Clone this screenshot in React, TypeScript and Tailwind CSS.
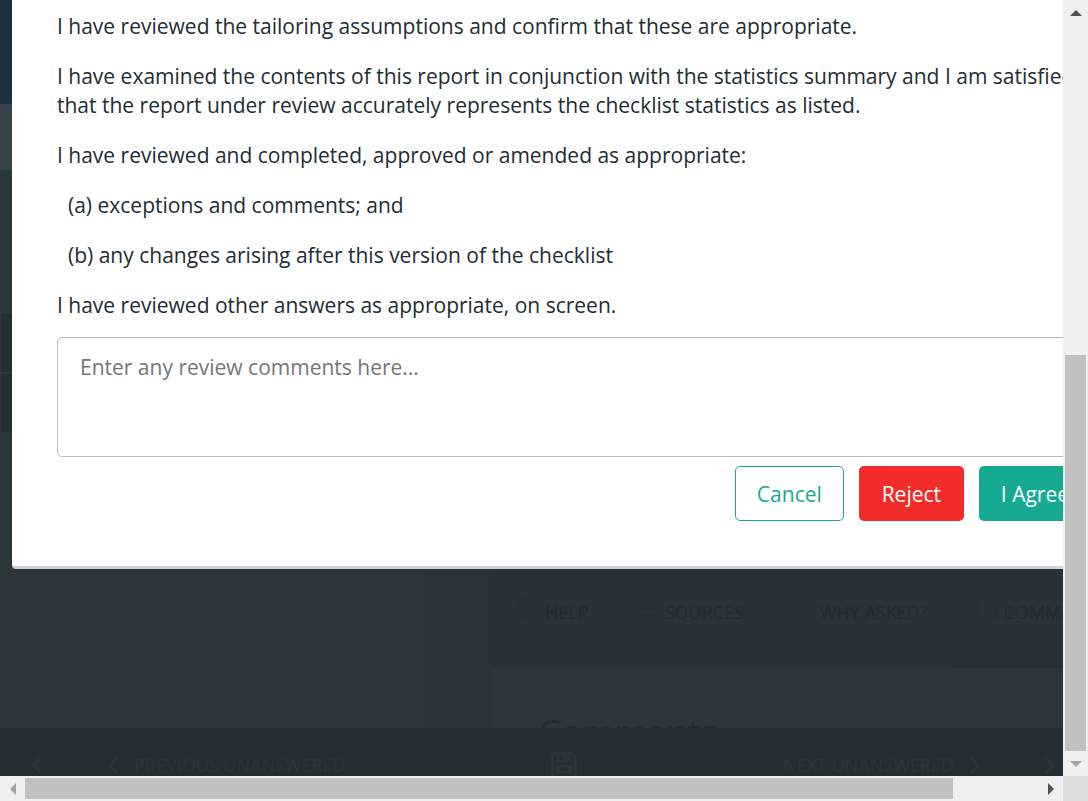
import React from "react";

function Chevron({ dir }: { dir: "left" | "right" }) {
  return (
    <svg width="10" height="17" viewBox="0 0 10 17" fill="none" stroke="currentColor" strokeWidth="3" aria-hidden="true">
      {dir === "left" ? <path d="M9 1 L1.8 8.5 L9 16" /> : <path d="M1 1 L8.2 8.5 L1 16" />}
    </svg>
  );
}

function InfoIcon() {
  return (
    <svg width="22" height="24" viewBox="0 0 22 24" fill="none" stroke="currentColor" strokeWidth="1.5" aria-hidden="true">
      <circle cx="11" cy="12" r="10" />
      <path d="M9.5 10.5 L12 10 L10.2 17 L12.4 16.4 M12.4 6.4 L12.6 7.6" />
    </svg>
  );
}

function ListIcon() {
  return (
    <svg width="22" height="24" viewBox="0 0 22 24" fill="none" stroke="currentColor" strokeWidth="1.6" aria-hidden="true">
      <path d="M6 6 H21 M6 12.5 H21 M6 19 H21 M1 6 H3 M1 12.5 H3 M1 19 H3" />
    </svg>
  );
}

function QuestionIcon() {
  return (
    <svg width="22" height="24" viewBox="0 0 22 24" fill="none" stroke="currentColor" strokeWidth="1.6" aria-hidden="true">
      <path d="M6 7 V4 H15 Q18 7 14.5 9.5 Q11 12 11 16 M11 19 V21.5" />
    </svg>
  );
}

function CommentIcon() {
  return (
    <svg width="22" height="24" viewBox="0 0 22 24" fill="none" stroke="currentColor" strokeWidth="1.5" aria-hidden="true">
      <path d="M17 20 A10 10 0 1 1 20 16 L21.5 22.5 Z" />
    </svg>
  );
}

function SaveIcon() {
  return (
    <svg width="26" height="27" viewBox="0 0 26 27" fill="none" stroke="currentColor" strokeWidth="2.6" aria-hidden="true">
      <path d="M3 1.5 H20 L24.5 6 V23.5 Q24.5 25.5 22.5 25.5 H3.5 Q1.5 25.5 1.5 23.5 V3 Q1.5 1.5 3 1.5 Z" />
      <path d="M7 2 V9 H17 V2 M13.5 3 V7.5 M7 14.5 H19 V20 H7 Z" />
    </svg>
  );
}

const tabs = [
  { label: "HELP", icon: <InfoIcon />, active: false },
  { label: "SOURCES", icon: <ListIcon />, active: false },
  { label: "WHY ASKED?", icon: <QuestionIcon />, active: false },
  { label: "COMMENTS", icon: <CommentIcon />, active: true },
];

function ChecklistPage() {
  return (
    <div className="flex h-full flex-col bg-[#293439]">
      <header className="h-[104px] shrink-0 bg-[#1f2f3d]" />
      <div className="h-[66px] shrink-0 bg-[#384347]" />
      <div className="flex min-h-0 flex-1">
        <aside className="w-[425px] shrink-0 bg-[#2b363b] pt-36 pl-px">
          <div className="flex flex-col gap-0.5">
            <div className="h-[58px] bg-[#242f34]" />
            <div className="h-[58px] bg-[#242f34]" />
          </div>
        </aside>
        <section className="ml-[67px] flex min-w-0 flex-1 flex-col justify-end overflow-hidden bg-[#283338]">
          <nav className="flex h-28 shrink-0">
            {tabs.map((tab) => (
              <button
                key={tab.label}
                type="button"
                className={
                  tab.active
                    ? "flex shrink-0 items-center gap-[7px] border-b-4 border-[#213137] px-6 pt-1 text-lg font-medium text-[#202b30]"
                    : "flex shrink-0 items-center gap-[7px] pr-[23px] pl-6 text-lg font-medium text-[#202b30]"
                }
              >
                <span className="pb-2 text-[#263136]">{tab.icon}</span>
                {tab.label}
              </button>
            ))}
          </nav>
          <div className="h-[60px] shrink-0 overflow-hidden bg-[#2b363b] px-[47px] pt-11">
            <h2 className="text-[35px] leading-10 text-[#222d32]">Comments</h2>
          </div>
        </section>
      </div>
      <footer className="h-12 shrink-0 overflow-hidden bg-[#242f34] text-lg text-[#2a353a]">
        <div className="flex h-[74px] items-center justify-between pr-2 pl-8">
          <div className="flex items-center gap-[66px]">
            <button type="button" aria-label="Previous"><Chevron dir="left" /></button>
            <button type="button" className="flex items-center gap-4 whitespace-nowrap">
              <Chevron dir="left" />
              PREVIOUS UNANSWERED
            </button>
          </div>
          <button type="button" aria-label="Save" className="text-[#2b363a]"><SaveIcon /></button>
          <div className="flex items-center gap-[65px]">
            <button type="button" className="flex items-center gap-4 whitespace-nowrap">
              NEXT UNANSWERED
              <Chevron dir="right" />
            </button>
            <button type="button" aria-label="Next"><Chevron dir="right" /></button>
          </div>
        </div>
      </footer>
    </div>
  );
}

function ReviewDialog() {
  return (
    <div
      role="dialog"
      aria-label="Review"
      className="absolute top-0 left-3 w-[1124px] rounded-b border-b-3 border-[#ccd3d7] bg-white px-[45px] pt-3 pb-[45px] text-[21px] leading-[29px] text-[#212d32]"
    >
      <div className="flex flex-col gap-[21px]">
        <p>I have reviewed the tailoring assumptions and confirm that these are appropriate.</p>
        <p>
          I have examined the contents of this report in conjunction with the statistics summary and I am satisfied
          that the report under review accurately represents the checklist statistics as listed.
        </p>
        <p>I have reviewed and completed, approved or amended as appropriate:</p>
        <p className="pl-[11px]">(a) exceptions and comments; and</p>
        <p className="pl-[11px]">(b) any changes arising after this version of the checklist</p>
        <p>I have reviewed other answers as appropriate, on screen.</p>
      </div>
      <textarea
        aria-label="Review comments"
        placeholder="Enter any review comments here..."
        className="mt-[17px] block h-[120px] w-full resize-none rounded-[5px] border border-[#b4bdc2] px-[22px] py-[15px] placeholder:text-[#757575]"
      />
      <div className="mt-[9px] flex justify-end gap-[15px]">
        <button type="button" className="h-[55px] min-w-[109px] rounded-[5px] border border-[#16a992] bg-white px-[21px] pt-0.5 font-medium text-[#16a992]">
          Cancel
        </button>
        <button type="button" className="h-[55px] min-w-[105px] rounded-[5px] bg-[#f22b2b] px-[22px] pt-0.5 font-medium text-white">
          Reject
        </button>
        <button type="button" className="h-[55px] rounded-[5px] bg-[#16aa93] px-[22px] pt-0.5 font-medium text-white">
          I Agree
        </button>
      </div>
    </div>
  );
}

export default function App() {
  return (
    <div className="grid h-screen grid-cols-[minmax(0,1fr)_25px] grid-rows-[minmax(0,1fr)_25px] overflow-hidden font-['Open_Sans',sans-serif]">
      <main className="relative overflow-hidden">
        <ChecklistPage />
        <ReviewDialog />
      </main>
      <div className="flex flex-col bg-[#f0f0f0]">
        <button type="button" aria-label="Scroll up" className="flex h-[25px] items-center justify-center">
          <svg width="12" height="6" viewBox="0 0 12 6" fill="#505050" aria-hidden="true"><path d="M6 0 L12 6 H0 Z" /></svg>
        </button>
        <div className="flex-[330_1_0%]" />
        <div className="mx-0.5 flex-[396_1_0%] bg-[#c1c1c1]" />
        <button type="button" aria-label="Scroll down" className="flex h-[25px] items-center justify-center">
          <svg width="12" height="6" viewBox="0 0 12 6" fill="#a3a3a3" aria-hidden="true"><path d="M0 0 H12 L6 6 Z" /></svg>
        </button>
      </div>
      <div className="flex bg-[#f0f0f0]">
        <button type="button" aria-label="Scroll left" className="flex w-[25px] items-center justify-center">
          <svg width="6" height="12" viewBox="0 0 6 12" fill="#a3a3a3" aria-hidden="true"><path d="M6 0 V12 L0 6 Z" /></svg>
        </button>
        <div className="my-0.5 flex-[928_1_0%] bg-[#c1c1c1]" />
        <div className="flex-[85_1_0%]" />
        <button type="button" aria-label="Scroll right" className="flex w-[25px] items-center justify-center">
          <svg width="6" height="12" viewBox="0 0 6 12" fill="#505050" aria-hidden="true"><path d="M0 0 V12 L6 6 Z" /></svg>
        </button>
      </div>
      <div className="bg-[#dcdcdc]" />
    </div>
  );
}
